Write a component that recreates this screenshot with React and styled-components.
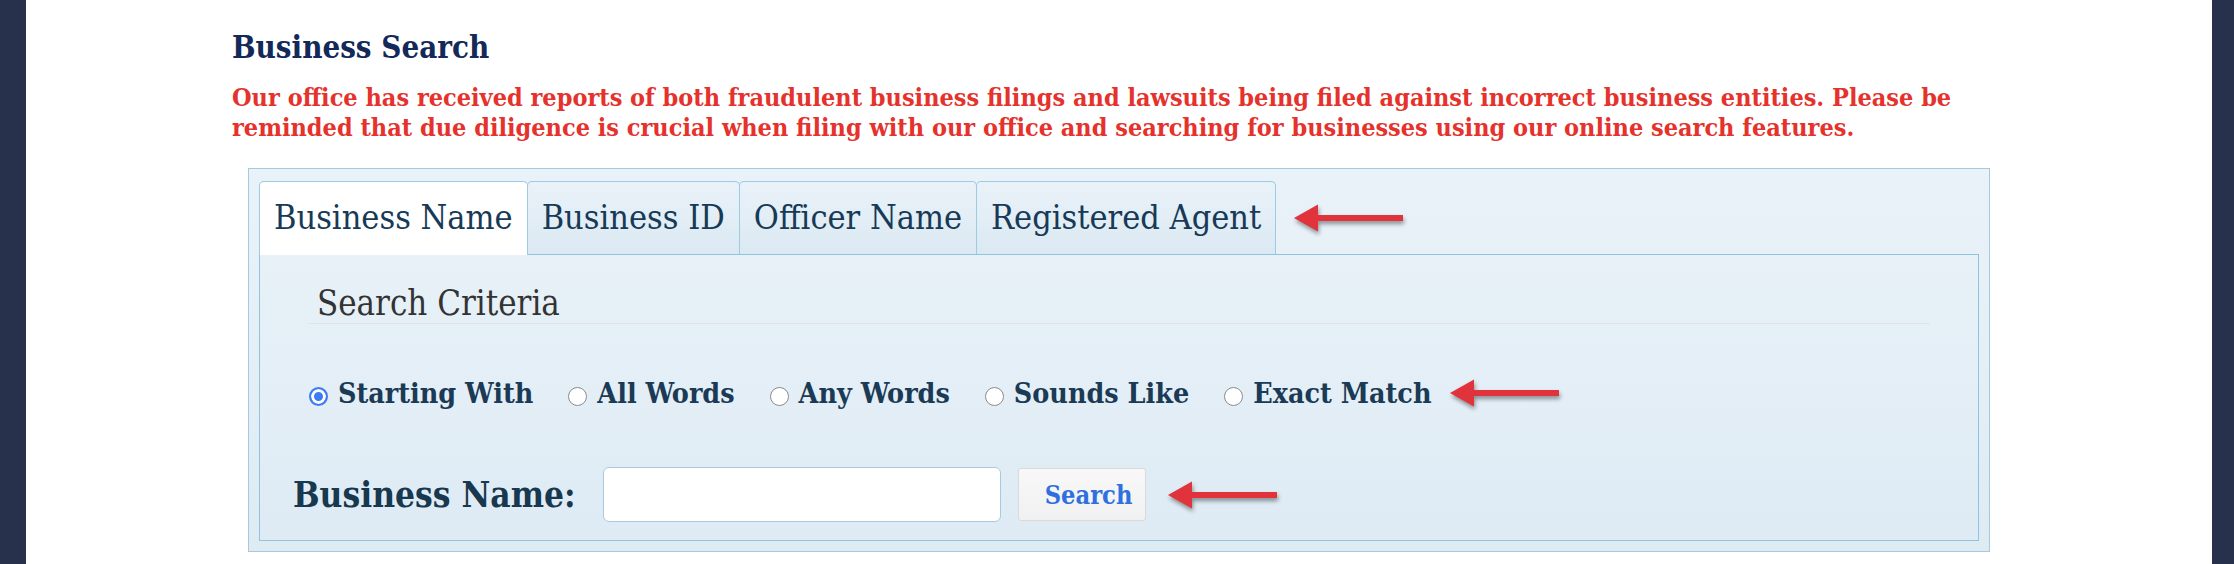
import React from 'react';
import styled, { createGlobalStyle } from 'styled-components';

const serif = `"DejaVu Serif Condensed", "DejaVu Serif", serif`;

const GlobalStyle = createGlobalStyle`
  html, body {
    margin: 0;
    padding: 0;
    background: #fff;
  }
  body {
    font-family: ${serif};
  }
`;

const Page = styled.div`
  display: flex;
  width: 2234px;
  min-height: 564px;
`;

const SideBar = styled.div`
  flex: 0 0 ${p => p.$w}px;
  background: #27314b;
`;

const Main = styled.main`
  flex: 1;
  padding: 29px 0 0 206px;
`;

const Title = styled.h2`
  margin: 0;
  font-size: 31px;
  line-height: 36px;
  font-weight: bold;
  color: #13295a;
`;

const Notice = styled.p`
  margin: 18px 0 0;
  font-size: 25px;
  line-height: 30px;
  font-weight: bold;
  color: #e5322c;
`;

const SearchBox = styled.div`
  box-sizing: border-box;
  width: 1742px;
  margin: 25px 0 0 16px;
  padding: 12px 10px 10px;
  border: 1px solid #a3cade;
  background: linear-gradient(#eaf2f9, #deebf3);
`;

const TabList = styled.div`
  display: flex;
  align-items: flex-end;
`;

const Tab = styled.div`
  box-sizing: border-box;
  position: relative;
  z-index: ${p => (p.$active ? 1 : 0)};
  height: ${p => (p.$active ? 74 : 73)}px;
  margin-bottom: ${p => (p.$active ? -1 : 0)}px;
  margin-left: -1px;
  padding: 14px 14px 0;
  border: 1px solid #9ccbe3;
  border-bottom: none;
  border-radius: 5px 5px 0 0;
  background: ${p => (p.$active ? '#fff' : 'linear-gradient(#eaf2f9, #dbe9f2)')};
  font-size: 34px;
  line-height: 42px;
  color: #173a56;
  white-space: nowrap;
  cursor: pointer;

  &:first-child {
    margin-left: 0;
  }
`;

const Panel = styled.div`
  border: 1px solid #8ec4e0;
  background: linear-gradient(#e8f1f8, #deebf4);
  padding: 29px 33px 18px;
`;

const Criteria = styled.div`
  padding: 0 15px;
`;

const Legend = styled.div`
  padding-left: 9px;
  font-size: 34.5px;
  line-height: 39px;
  color: #333;
  border-bottom: 1px solid #e3e3e3;
`;

const RadioRow = styled.div`
  display: flex;
  align-items: center;
  height: 32px;
  margin-top: 53px;
  padding-left: 1px;
`;

const Option = styled.label`
  display: inline-flex;
  align-items: center;
  gap: 10px;
  font-size: 28.4px;
  line-height: 32px;
  font-weight: bold;
  color: #1a3a55;
  white-space: nowrap;

  & + & {
    margin-left: 35px;
  }
`;

const Radio = styled.input.attrs({ type: 'radio' })`
  appearance: none;
  box-sizing: border-box;
  width: 19px;
  height: 19px;
  margin: 6px 0 0;
  border: 1px solid #8a8a8a;
  border-radius: 50%;
  background: #fff;

  &:checked {
    border: 2px solid #3b7cf6;
    background: #3b7cf6;
    box-shadow: inset 0 0 0 3px #fff;
  }
`;

const SearchRow = styled.div`
  display: flex;
  align-items: center;
  height: 55px;
  margin-top: 58px;
`;

const FieldLabel = styled.label`
  margin-right: 27px;
  font-size: 35px;
  line-height: 40px;
  font-weight: bold;
  color: #17384f;
`;

const TextInput = styled.input`
  box-sizing: border-box;
  width: 398px;
  height: 55px;
  margin: 0;
  padding: 0 12px;
  border: 1px solid #a9cadd;
  border-radius: 6px;
  background: #fff;
  font-family: ${serif};
  font-size: 22px;
`;

const SearchButton = styled.button`
  box-sizing: border-box;
  height: 53px;
  margin-left: 17px;
  padding: 0 13px 0 26px;
  border: 1px solid #dadada;
  border-radius: 3px;
  background: linear-gradient(#f8f8f8, #f1f1f1);
  font-family: ${serif};
  font-size: 25.2px;
  font-weight: bold;
  color: #2f6fdf;
  cursor: pointer;
`;

const ArrowSvg = styled.svg`
  flex: none;
  align-self: center;
  margin-left: ${p => p.$gap}px;
  filter: drop-shadow(1px 3px 2px rgba(0, 0, 0, 0.4));
`;

const Arrow = ({ gap }) => (
  <ArrowSvg $gap={gap} width="110" height="30" viewBox="0 0 110 30">
    <rect x="20" y="12" width="89" height="6" fill="#e0333b" />
    <polygon points="0,15 24,1.5 24,28.5" fill="#e0333b" />
  </ArrowSvg>
);

const tabs = ['Business Name', 'Business ID', 'Officer Name', 'Registered Agent'];
const options = ['Starting With', 'All Words', 'Any Words', 'Sounds Like', 'Exact Match'];

export default function App() {
  return (
    <>
      <GlobalStyle />
      <Page>
        <SideBar $w={26} />
        <Main>
          <Title>Business Search</Title>
          <Notice>
            Our office has received reports of both fraudulent business filings and lawsuits being filed against incorrect business entities. Please be
            <br />
            reminded that due diligence is crucial when filing with our office and searching for businesses using our online search features.
          </Notice>

          <SearchBox>
            <TabList>
              {tabs.map((t, i) => (
                <Tab key={t} $active={i === 0}>{t}</Tab>
              ))}
              <Arrow gap={18} />
            </TabList>

            <Panel>
              <Criteria>
                <Legend>Search Criteria</Legend>
                <RadioRow>
                  {options.map((o, i) => (
                    <Option key={o}>
                      <Radio name="searchType" defaultChecked={i === 0} />
                      {o}
                    </Option>
                  ))}
                  <Arrow gap={19} />
                </RadioRow>
              </Criteria>

              <SearchRow>
                <FieldLabel htmlFor="bizName">Business Name:</FieldLabel>
                <TextInput id="bizName" type="text" />
                <SearchButton type="button">Search</SearchButton>
                <Arrow gap={22} />
              </SearchRow>
            </Panel>
          </SearchBox>
        </Main>
        <SideBar $w={22} />
      </Page>
    </>
  );
}
